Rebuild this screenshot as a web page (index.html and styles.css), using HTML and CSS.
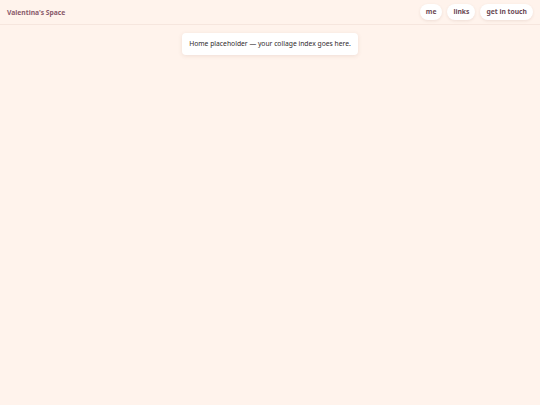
FILE: index.html
```html
<!DOCTYPE html>
<html>
<head>
<meta charset="utf-8">
<link rel="stylesheet" href="styles.css">
</head>
<body>
<header class="topbar">
  <div class="brand">Valentina's Space</div>
  <nav class="nav">
    <a class="pill">me</a>
    <a class="pill">links</a>
    <a class="pill">get in touch</a>
  </nav>
</header>
<main class="main">
  <div class="card">Home placeholder — your collage index goes here.</div>
</main>
</body>
</html>
```
FILE: styles.css
```css
html, body { margin: 0; padding: 0; }
body {
  background: #fff3ec;
  font-family: "Noto Sans", "Open Sans", sans-serif;
  width: 540px;
  height: 405px;
  overflow: hidden;
}
.topbar {
  height: 25px;
  box-sizing: border-box;
  display: flex;
  align-items: center;
  justify-content: space-between;
  padding: 0 7px;
  border-bottom: 1px solid #f6e6de;
}
.brand {
  font-size: 6.75px;
  font-weight: 700;
  color: #8a5a6b;
}
.nav { display: flex; gap: 5px; }
.pill {
  background: #ffffff;
  border-radius: 8px;
  height: 16px;
  line-height: 16px;
  padding: 0 6px;
  font-size: 6.75px;
  font-weight: 700;
  color: #6b4a55;
  box-shadow: 0 1px 3px rgba(120, 70, 60, 0.12);
}
.main {
  display: flex;
  justify-content: center;
  padding-top: 8px;
}
.card {
  background: #ffffff;
  border-radius: 4px;
  padding: 0 7px;
  height: 22px;
  line-height: 22px;
  font-size: 6.75px;
  color: #2f2a2c;
  box-shadow: 0 1px 4px rgba(120, 70, 60, 0.12);
}
```
